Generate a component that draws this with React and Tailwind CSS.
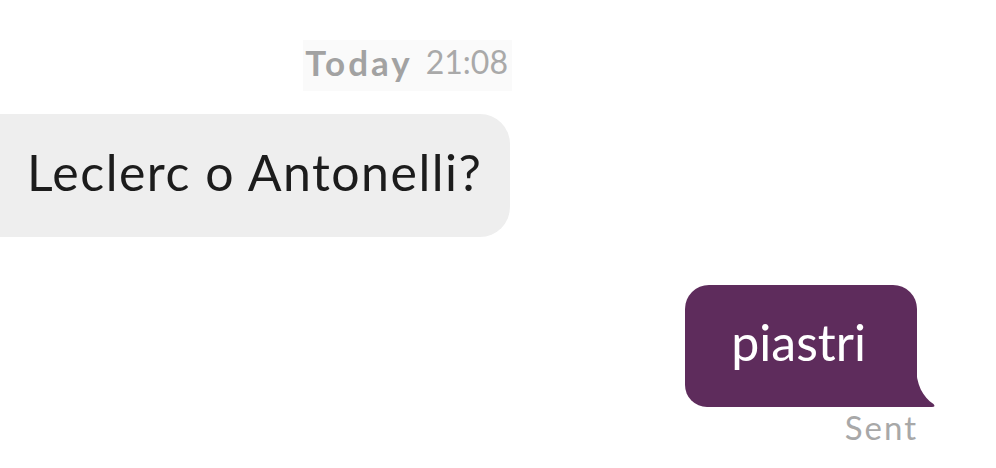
export default function App() {
  return (
    <div className="w-[996px] h-[468px] bg-white overflow-hidden font-['Lato',sans-serif]">
      <div className="w-[512px] flex justify-end pt-[40px]">
        <div className="bg-[#fafafa] h-[51px] pl-[2px] pr-[4px] pb-[7px] flex items-center leading-none">
          <span className="font-bold text-[35px] tracking-[3px] text-[#a2a2a2]">Today</span>
          <span className="ml-[13px] text-[32px] text-[#a9a9a9]">21:08</span>
        </div>
      </div>
      <div className="mt-[23px] w-[510px] h-[123px] bg-[#eeeeee] rounded-r-[30px] flex items-center pl-[27px] pb-[7px] text-[50px] tracking-[1.5px] leading-none text-[#1c1c1c]">
        Leclerc o Antonelli?
      </div>
      <div className="mt-[48px] flex justify-end pr-[79px]">
        <div className="relative h-[122px] bg-[#5e2c5c] rounded-t-[24px] rounded-bl-[22px] pl-[46px] pr-[51px] pb-[9px] flex items-center text-white text-[50px] leading-none">
          piastri
          <svg
            className="absolute right-[-19px] bottom-0"
            width="20"
            height="42"
            viewBox="0 0 20 42"
          >
            <path d="M0 0 C0 20 7 32 17.5 39 Q20 42 16 42 L0 42 Z" fill="#5e2c5c" />
          </svg>
        </div>
      </div>
      <div className="mt-[3px] flex justify-end pr-[78px] text-[33px] tracking-[2px] leading-[34px] text-[#a8a8a8]">
        Sent
      </div>
    </div>
  );
}
